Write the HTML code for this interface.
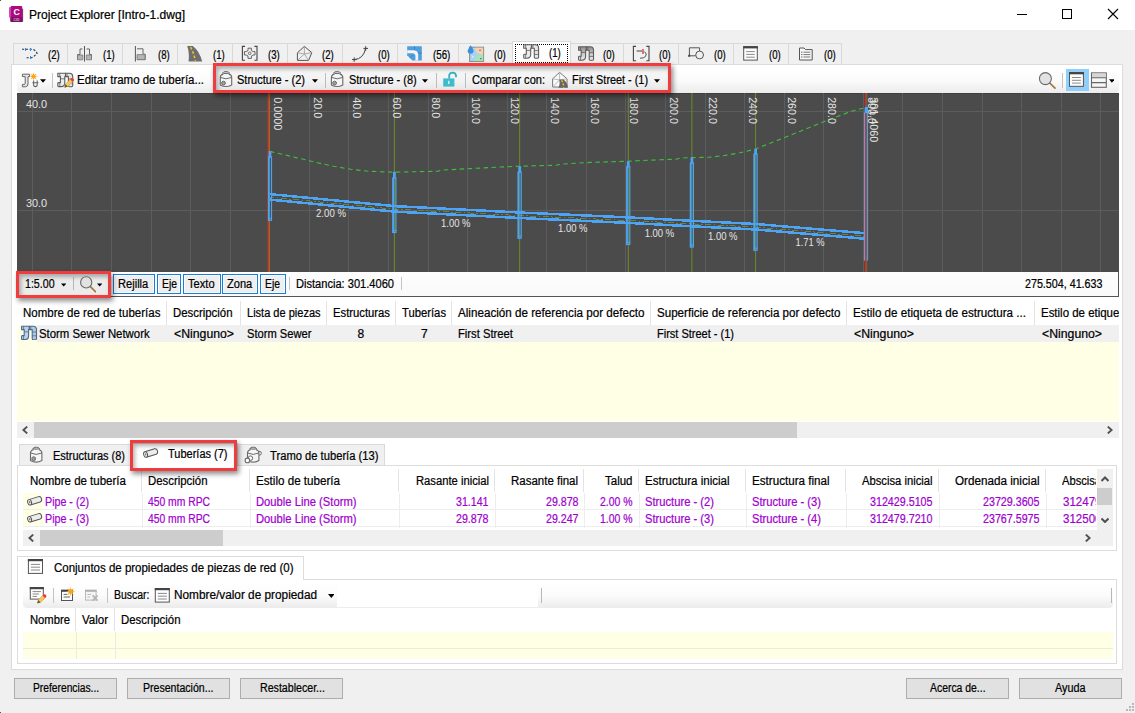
<!DOCTYPE html>
<html lang="es"><head><meta charset="utf-8"><title>Project Explorer [Intro-1.dwg]</title>
<style>
html,body{margin:0;padding:0;}
body{width:1135px;height:713px;overflow:hidden;background:#f0f0f0;position:relative;font-family:"Liberation Sans",sans-serif;font-size:12px;color:#000;}
#root{position:absolute;left:0;top:0;width:1135px;height:713px;overflow:hidden;}
#root div,#root span.t,#root svg{position:absolute;box-sizing:border-box;}
span.t{white-space:nowrap;line-height:16px;height:16px;transform-origin:0 0;-webkit-text-stroke:0.22px;}
</style></head><body><div id="root">
<div style="left:0px;top:0px;width:1135px;height:30px;background:#fff;"></div>
<svg style="left:8px;top:5px" width="17" height="18" viewBox="8 5 17 18" ><path d="M9 7.4L11 6.4V17.2L9 17.6Z" fill="#d648b6"/><path d="M11.6 6H21.4Q22.2 6 22.2 6.8V17.2H10.9V6.7Q10.9 6 11.6 6Z" fill="#ae0a80"/><path d="M22.2 8.6L23.1 9V21.2Q23.1 21.9 22.4 21.9H22.2Z" fill="#6e0a54"/><path d="M10.2 17.1H22.3V21.9H11Q10.2 21.9 10.2 21.1Z" fill="#820f66"/><text x="16.6" y="14.9" font-family="Liberation Sans,sans-serif" font-weight="bold" font-size="8.8" fill="#fff" text-anchor="middle">C</text><text x="16.5" y="20.5" font-family="Liberation Sans,sans-serif" font-weight="bold" font-size="3.1" fill="#dfa8d0" text-anchor="middle">C3D</text></svg>
<div style="left:0px;top:0px;width:1px;height:1px;background:#555;"></div>
<span class="t" style="left:29.00px;top:7px;transform:scaleX(1.0039);">Project Explorer [Intro-1.dwg]</span>
<div style="left:1017px;top:14px;width:10px;height:1px;background:#000;"></div>
<div style="left:1062px;top:9px;width:10px;height:10px;border:1px solid #000;"></div>
<svg style="left:1107px;top:8px" width="12" height="12" viewBox="0 0 12 12"><path d="M1 1 L11 11 M11 1 L1 11" stroke="#000" stroke-width="1.1" fill="none"/></svg>
<div style="left:13px;top:43px;width:55px;height:22px;background:#f0f0f0;border:1px solid #d9d9d9;"></div>
<div style="left:67px;top:43px;width:56px;height:22px;background:#f0f0f0;border:1px solid #d9d9d9;"></div>
<div style="left:122px;top:43px;width:56px;height:22px;background:#f0f0f0;border:1px solid #d9d9d9;"></div>
<div style="left:177px;top:43px;width:56px;height:22px;background:#f0f0f0;border:1px solid #d9d9d9;"></div>
<div style="left:232px;top:43px;width:56px;height:22px;background:#f0f0f0;border:1px solid #d9d9d9;"></div>
<div style="left:287px;top:43px;width:56px;height:22px;background:#f0f0f0;border:1px solid #d9d9d9;"></div>
<div style="left:342px;top:43px;width:56px;height:22px;background:#f0f0f0;border:1px solid #d9d9d9;"></div>
<div style="left:397px;top:43px;width:62px;height:22px;background:#f0f0f0;border:1px solid #d9d9d9;"></div>
<div style="left:458px;top:43px;width:56px;height:22px;background:#f0f0f0;border:1px solid #d9d9d9;"></div>
<div style="left:570px;top:43px;width:54px;height:22px;background:#f0f0f0;border:1px solid #d9d9d9;"></div>
<div style="left:623px;top:43px;width:56px;height:22px;background:#f0f0f0;border:1px solid #d9d9d9;"></div>
<div style="left:678px;top:43px;width:56px;height:22px;background:#f0f0f0;border:1px solid #d9d9d9;"></div>
<div style="left:733px;top:43px;width:56px;height:22px;background:#f0f0f0;border:1px solid #d9d9d9;"></div>
<div style="left:788px;top:43px;width:54px;height:22px;background:#f0f0f0;border:1px solid #d9d9d9;"></div>
<div style="left:11px;top:64px;width:1112px;height:606px;background:#fff;border:1px solid #dcdcdc;"></div>
<div style="left:512px;top:41px;width:59px;height:24px;background:#fff;border:1px solid #d9d9d9;border-bottom:none;"></div>
<div style="left:515px;top:44px;width:53px;height:19px;border:1px dotted #000;"></div>
<svg style="left:17px;top:93px" width="1102" height="179" viewBox="17 93 1102 179" font-family="Liberation Sans,sans-serif">
<rect x="17" y="93" width="1102" height="179" fill="#4b4b4b"/>
<rect x="17" y="93" width="1102" height="1" fill="#404040"/>
<path d="M32.5 93V272 M71.5 93V272 M111.5 93V272 M151.5 93V272 M190.5 93V272 M230.5 93V272 M269.5 93V272 M309.5 93V272 M348.5 93V272 M388.5 93V272 M428.5 93V272 M467.5 93V272 M507.5 93V272 M546.5 93V272 M586.5 93V272 M625.5 93V272 M665.5 93V272 M705.5 93V272 M744.5 93V272 M784.5 93V272 M823.5 93V272 M863.5 93V272 M902.5 93V272 M942.5 93V272 M982.5 93V272 M1021.5 93V272 M1061.5 93V272 M1100.5 93V272 M17 111.5H1119 M17 210.5H1119" stroke="#5c5c5c" stroke-width="1" fill="none"/>
<path d="M394.4 93V272 M519.7 93V272 M628.3 93V272 M691.9 93V272 M755.6 93V272" stroke="#6f8a2a" stroke-width="1" fill="none"/>
<path d="M270 151.4 L282.8 154.4 L296 157.6 L309.3 160.7 L321 163.6 L333.3 166.2 L351 169.3 L368.7 171.3 L394 172.2 L420 171.6 L437.9 171.3 L441 170.2 L470 168.6 L501 167 L519.7 166.2 L540 165.6 L556.6 165.3 L560 164.2 L590.4 162.4 L610 161.8 L628 161.2 L638.4 160.7 L660 159.8 L676 159.2 L680 158.2 L692 157.6 L710 157.2 L725 155.4 L740 152.8 L755.6 149 L775.8 141 L801 130.9 L826 120.8 L851.5 111.2 L865.5 107.6" stroke="#3cc03c" stroke-width="1.1" stroke-dasharray="4.5 3.5" fill="none"/>
<path d="M268.5 197.05 L394.4 209.15 L519.7 215.55 L628.3 220.45000000000002 L691.9 223.85000000000002 L755.6 227.05 L865.9 236.35000000000002" stroke="#76892c" stroke-width="0.9" stroke-dasharray="6 2.5 1.5 2.5" fill="none" shape-rendering="crispEdges"/>
<path d="M268.5 194 L394.4 206.1 L519.7 212.5 L628.3 217.4 L691.9 220.8 L755.6 224 L865.9 233.3 M268.5 199.5 L394.4 211.6 L519.7 218.0 L628.3 222.9 L691.9 226.3 L755.6 229.5 L865.9 238.8" stroke="#4ba4f6" stroke-width="2.5" fill="none" shape-rendering="crispEdges"/>
<rect x="267.6" y="93" width="1.6" height="179" fill="#e8291c"/>
<rect x="269.2" y="93" width="0.8" height="179" fill="#6f8a2a"/>
<rect x="268.5" y="157" width="3.0" height="63.3" fill="none" stroke="#4ba4f6" stroke-width="1.2"/>
<rect x="268.0" y="157" width="1.6" height="63.8" fill="#4ba4f6"/>
<rect x="268.6" y="151.2" width="2.8" height="6.3" fill="#4ba4f6"/>
<path d="M268.0 218.2h4.0" stroke="#4ba4f6" stroke-width="1"/>
<rect x="392.9" y="177.8" width="3.0" height="54.7" fill="none" stroke="#4ba4f6" stroke-width="1.2"/>
<rect x="392.4" y="177.8" width="1.6" height="55.2" fill="#4ba4f6"/>
<rect x="393.0" y="171.8" width="2.8" height="6.5" fill="#4ba4f6"/>
<path d="M392.4 230.4h4.0" stroke="#4ba4f6" stroke-width="1"/>
<rect x="518.2" y="172" width="3.0" height="66.2" fill="none" stroke="#4ba4f6" stroke-width="1.2"/>
<rect x="517.7" y="172" width="1.6" height="66.7" fill="#4ba4f6"/>
<rect x="518.3" y="166.2" width="2.8" height="6.3" fill="#4ba4f6"/>
<path d="M517.7 236.1h4.0" stroke="#4ba4f6" stroke-width="1"/>
<rect x="626.8" y="166.7" width="3.0" height="77.8" fill="none" stroke="#4ba4f6" stroke-width="1.2"/>
<rect x="626.3" y="166.7" width="1.6" height="78.3" fill="#4ba4f6"/>
<rect x="626.9" y="161.2" width="2.8" height="6.0" fill="#4ba4f6"/>
<path d="M626.3 242.4h4.0" stroke="#4ba4f6" stroke-width="1"/>
<rect x="690.4" y="163" width="3.0" height="84.0" fill="none" stroke="#4ba4f6" stroke-width="1.2"/>
<rect x="689.9" y="163" width="1.6" height="84.5" fill="#4ba4f6"/>
<rect x="690.5" y="157.4" width="2.8" height="6.1" fill="#4ba4f6"/>
<path d="M689.9 244.9h4.0" stroke="#4ba4f6" stroke-width="1"/>
<rect x="754.1" y="154" width="3.0" height="96.3" fill="none" stroke="#4ba4f6" stroke-width="1.2"/>
<rect x="753.6" y="154" width="1.6" height="96.8" fill="#4ba4f6"/>
<rect x="754.2" y="149" width="2.8" height="5.5" fill="#4ba4f6"/>
<path d="M753.6 248.2h4.0" stroke="#4ba4f6" stroke-width="1"/>
<rect x="864.5" y="113" width="3.0" height="146.9" fill="none" stroke="#4ba4f6" stroke-width="1.2"/>
<rect x="864.0" y="113" width="1.6" height="147.4" fill="#4ba4f6"/>
<rect x="864.6" y="107.6" width="2.8" height="5.9" fill="#4ba4f6"/>
<path d="M864.0 257.8h4.0" stroke="#4ba4f6" stroke-width="1"/>
<rect x="865.1" y="93" width="1.5" height="179" fill="#e8291c"/>
<rect x="866.6" y="93" width="0.5" height="179" fill="#6f8a2a"/>
<rect x="865" y="107" width="3" height="6" fill="#4ba4f6"/>
<text transform="translate(25.9,108.3) scale(0.931,1)" font-size="11.7" fill="#e4e4e4">40.0</text>
<text transform="translate(25.9,207.3) scale(0.931,1)" font-size="11.7" fill="#e4e4e4">30.0</text>
<text transform="translate(274.0,97.2) rotate(90) scale(0.928,1)" font-size="11.7" fill="#e4e4e4">0.0000</text>
<text transform="translate(313.6,97.2) rotate(90) scale(0.922,1)" font-size="11.7" fill="#e4e4e4">20.0</text>
<text transform="translate(353.1,97.2) rotate(90) scale(0.922,1)" font-size="11.7" fill="#e4e4e4">40.0</text>
<text transform="translate(392.7,97.2) rotate(90) scale(0.922,1)" font-size="11.7" fill="#e4e4e4">60.0</text>
<text transform="translate(432.3,97.2) rotate(90) scale(0.922,1)" font-size="11.7" fill="#e4e4e4">80.0</text>
<text transform="translate(471.8,97.2) rotate(90) scale(0.909,1)" font-size="11.7" fill="#e4e4e4">100.0</text>
<text transform="translate(511.4,97.2) rotate(90) scale(0.909,1)" font-size="11.7" fill="#e4e4e4">120.0</text>
<text transform="translate(551.0,97.2) rotate(90) scale(0.909,1)" font-size="11.7" fill="#e4e4e4">140.0</text>
<text transform="translate(590.6,97.2) rotate(90) scale(0.909,1)" font-size="11.7" fill="#e4e4e4">160.0</text>
<text transform="translate(630.1,97.2) rotate(90) scale(0.909,1)" font-size="11.7" fill="#e4e4e4">180.0</text>
<text transform="translate(669.7,97.2) rotate(90) scale(0.909,1)" font-size="11.7" fill="#e4e4e4">200.0</text>
<text transform="translate(709.3,97.2) rotate(90) scale(0.909,1)" font-size="11.7" fill="#e4e4e4">220.0</text>
<text transform="translate(748.8,97.2) rotate(90) scale(0.909,1)" font-size="11.7" fill="#e4e4e4">240.0</text>
<text transform="translate(788.4,97.2) rotate(90) scale(0.909,1)" font-size="11.7" fill="#e4e4e4">260.0</text>
<text transform="translate(828.0,97.2) rotate(90) scale(0.909,1)" font-size="11.7" fill="#e4e4e4">280.0</text>
<text transform="translate(867.5,97.2) rotate(90) scale(0.909,1)" font-size="11.7" fill="#e4e4e4">300.0</text>
<text transform="translate(870.4,97.2) rotate(90) scale(0.922,1)" font-size="11.7" fill="#e4e4e4">301.4060</text>
<text transform="translate(316,217) scale(0.876,1)" font-size="11" fill="#e4e4e4">2.00 %</text>
<text transform="translate(441,227) scale(0.861,1)" font-size="11" fill="#e4e4e4">1.00 %</text>
<text transform="translate(558,232) scale(0.861,1)" font-size="11" fill="#e4e4e4">1.00 %</text>
<text transform="translate(644.7,237.2) scale(0.861,1)" font-size="11" fill="#e4e4e4">1.00 %</text>
<text transform="translate(708,240) scale(0.861,1)" font-size="11" fill="#e4e4e4">1.00 %</text>
<text transform="translate(795.5,246.3) scale(0.847,1)" font-size="11" fill="#e4e4e4">1.71 %</text>
</svg>
<div style="left:17px;top:68px;width:1102px;height:24.5px;background:linear-gradient(#ffffff 0%,#fbfbfb 50%,#ececec 100%);border-radius:4px;"></div>
<svg style="left:39.8px;top:78.5px" width="6.0" height="4" viewBox="0 0 7 4"><path d="M0 0H7L3.5 4Z" fill="#000"/></svg>
<div style="left:52px;top:73px;width:1px;height:15px;background:#c4c4c4;"></div>
<span class="t" style="left:76.70px;top:72px;transform:scaleX(0.9570);">Editar tramo de tubería...</span>
<span class="t" style="left:237.40px;top:72px;transform:scaleX(0.9189);">Structure - (2)</span>
<svg style="left:311.6px;top:78.5px" width="6.0" height="4" viewBox="0 0 7 4"><path d="M0 0H7L3.5 4Z" fill="#000"/></svg>
<div style="left:325px;top:73px;width:1px;height:15px;background:#c4c4c4;"></div>
<span class="t" style="left:348.70px;top:72px;transform:scaleX(0.9149);">Structure - (8)</span>
<svg style="left:422.3px;top:78.5px" width="6.0" height="4" viewBox="0 0 7 4"><path d="M0 0H7L3.5 4Z" fill="#000"/></svg>
<div style="left:436px;top:73px;width:1px;height:15px;background:#c4c4c4;"></div>
<div style="left:465px;top:73px;width:1px;height:15px;background:#c4c4c4;"></div>
<span class="t" style="left:471.90px;top:72px;transform:scaleX(0.9194);">Comparar con:</span>
<span class="t" style="left:571.50px;top:72px;transform:scaleX(0.9048);">First Street - (1)</span>
<svg style="left:653.7px;top:78.5px" width="6.0" height="4" viewBox="0 0 7 4"><path d="M0 0H7L3.5 4Z" fill="#000"/></svg>
<div style="left:1062px;top:73px;width:1px;height:15px;background:#c4c4c4;"></div>
<div style="left:1066px;top:69px;width:23px;height:22px;background:#91cffb;"></div>
<div style="left:17px;top:272px;width:1102px;height:25px;background:#555;"></div>
<div style="left:17px;top:272px;width:1101px;height:24px;background:linear-gradient(#fdfdfd,#fafafa);"></div>
<span class="t" style="left:25.20px;top:276px;transform:scaleX(0.8862);">1:5.00</span>
<svg style="left:60.9px;top:282.6px" width="5.3999999999999995" height="4" viewBox="0 0 7 4"><path d="M0 0H7L3.5 4Z" fill="#000"/></svg>
<div style="left:73px;top:277px;width:1px;height:13px;background:#c4c4c4;"></div>
<svg style="left:96.6px;top:282.6px" width="5.3999999999999995" height="4" viewBox="0 0 7 4"><path d="M0 0H7L3.5 4Z" fill="#000"/></svg>
<div style="left:113px;top:274px;width:41.5px;height:20px;background:#efefef;border:1px solid #1a7fd4;box-shadow:inset 0 0 0 1px #fafafa;"></div>
<span class="t" style="left:118.20px;top:276px;transform:scaleX(0.9266);">Rejilla</span>
<div style="left:156.6px;top:274px;width:24.700000000000017px;height:20px;background:#efefef;border:1px solid #1a7fd4;box-shadow:inset 0 0 0 1px #fafafa;"></div>
<span class="t" style="left:161.60px;top:276px;transform:scaleX(0.8613);">Eje</span>
<div style="left:183px;top:274px;width:37.5px;height:20px;background:#efefef;border:1px solid #1a7fd4;box-shadow:inset 0 0 0 1px #fafafa;"></div>
<span class="t" style="left:188.00px;top:276px;transform:scaleX(0.9268);">Texto</span>
<div style="left:222.2px;top:274px;width:35.80000000000001px;height:20px;background:#efefef;border:1px solid #1a7fd4;box-shadow:inset 0 0 0 1px #fafafa;"></div>
<span class="t" style="left:227.30px;top:276px;transform:scaleX(0.9197);">Zona</span>
<div style="left:260.2px;top:274px;width:26.100000000000023px;height:20px;background:#efefef;border:1px solid #1a7fd4;box-shadow:inset 0 0 0 1px #fafafa;"></div>
<span class="t" style="left:265.20px;top:276px;transform:scaleX(0.8613);">Eje</span>
<div style="left:289px;top:277px;width:1px;height:13px;background:#c4c4c4;"></div>
<span class="t" style="left:296.30px;top:276px;transform:scaleX(0.9237);">Distancia: 301.4060</span>
<div style="left:401px;top:277px;width:1px;height:13px;background:#c4c4c4;"></div>
<span class="t" style="left:1025.00px;top:276px;transform:scaleX(0.8927);">275.504, 41.633</span>
<div style="left:166px;top:301px;width:1px;height:24px;background:#e3e3e3;"></div>
<div style="left:240px;top:301px;width:1px;height:24px;background:#e3e3e3;"></div>
<div style="left:326px;top:301px;width:1px;height:24px;background:#e3e3e3;"></div>
<div style="left:395px;top:301px;width:1px;height:24px;background:#e3e3e3;"></div>
<div style="left:451px;top:301px;width:1px;height:24px;background:#e3e3e3;"></div>
<div style="left:650px;top:301px;width:1px;height:24px;background:#e3e3e3;"></div>
<div style="left:846px;top:301px;width:1px;height:24px;background:#e3e3e3;"></div>
<div style="left:1034px;top:301px;width:1px;height:24px;background:#e3e3e3;"></div>
<span class="t" style="left:23.20px;top:305px;transform:scaleX(0.9582);">Nombre de red de tuberías</span>
<span class="t" style="left:173.30px;top:305px;transform:scaleX(0.9490);">Descripción</span>
<span class="t" style="left:247.00px;top:305px;transform:scaleX(0.9187);">Lista de piezas</span>
<span class="t" style="left:333.00px;top:305px;transform:scaleX(0.9390);">Estructuras</span>
<span class="t" style="left:401.80px;top:305px;transform:scaleX(0.9382);">Tuberías</span>
<span class="t" style="left:458.00px;top:305px;transform:scaleX(0.9708);">Alineación de referencia por defecto</span>
<span class="t" style="left:657.00px;top:305px;transform:scaleX(0.9653);">Superficie de referencia por defecto</span>
<span class="t" style="left:852.80px;top:305px;transform:scaleX(0.9676);">Estilo de etiqueta de estructura ...</span>
<div style="left:1041px;top:300px;width:78px;height:25px;overflow:hidden;"><span class="t" style="left:0px;top:5px;transform:scaleX(0.955)">Estilo de etiqueta de tubería</span></div>
<div style="left:17px;top:325px;width:1102px;height:17px;background:#f0f0f0;"></div>
<span class="t" style="left:39.00px;top:326px;transform:scaleX(0.9478);">Storm Sewer Network</span>
<span class="t" style="left:174.30px;top:326px;transform:scaleX(1.0221);">&lt;Ninguno&gt;</span>
<span class="t" style="left:247.00px;top:326px;transform:scaleX(0.9294);">Storm Sewer</span>
<span class="t" style="left:357.50px;top:326px;">8</span>
<span class="t" style="left:421.00px;top:326px;">7</span>
<span class="t" style="left:458.00px;top:326px;transform:scaleX(0.9370);">First Street</span>
<span class="t" style="left:657.00px;top:326px;transform:scaleX(0.9167);">First Street - (1)</span>
<span class="t" style="left:853.50px;top:326px;transform:scaleX(1.0221);">&lt;Ninguno&gt;</span>
<span class="t" style="left:1041.50px;top:326px;transform:scaleX(1.0221);">&lt;Ninguno&gt;</span>
<div style="left:17px;top:342px;width:1102px;height:79px;background:#ffffe6;"></div>
<div style="left:17px;top:422px;width:1102px;height:15.5px;background:#f0f0f0;"></div>
<div style="left:34px;top:422px;width:763px;height:15.5px;background:#cdcdcd;"></div>
<svg style="left:22px;top:425.5px" width="6" height="8" viewBox="0 0 6 8"><path d="M5.2 0.6L1.4 4L5.2 7.4" stroke="#505050" stroke-width="1.9" fill="none"/></svg>
<svg style="left:1107px;top:425.5px" width="6" height="8" viewBox="0 0 6 8"><path d="M0.8 0.6L4.6 4L0.8 7.4" stroke="#505050" stroke-width="1.9" fill="none"/></svg>
<div style="left:19px;top:444px;width:112px;height:22px;background:#f0f0f0;border:1px solid #d9d9d9;"></div>
<div style="left:237px;top:444px;width:148px;height:22px;background:#f0f0f0;border:1px solid #d9d9d9;"></div>
<div style="left:17px;top:465px;width:1100px;height:86px;background:#fff;border:1px solid #dcdcdc;"></div>
<div style="left:130px;top:443px;width:108px;height:23px;background:#fff;border:1px solid #d9d9d9;border-bottom:none;"></div>
<span class="t" style="left:53.00px;top:448px;transform:scaleX(0.9149);">Estructuras (8)</span>
<span class="t" style="left:167.50px;top:446px;transform:scaleX(0.9168);">Tuberías (7)</span>
<span class="t" style="left:269.50px;top:448px;transform:scaleX(0.9329);">Tramo de tubería (13)</span>
<div style="left:141px;top:469px;width:1px;height:23px;background:#e3e3e3;"></div>
<div style="left:142px;top:493px;width:1px;height:35px;background:#ededed;"></div>
<div style="left:249px;top:469px;width:1px;height:23px;background:#e3e3e3;"></div>
<div style="left:250px;top:493px;width:1px;height:35px;background:#ededed;"></div>
<div style="left:398px;top:469px;width:1px;height:23px;background:#e3e3e3;"></div>
<div style="left:399px;top:493px;width:1px;height:35px;background:#ededed;"></div>
<div style="left:494px;top:469px;width:1px;height:23px;background:#e3e3e3;"></div>
<div style="left:495px;top:493px;width:1px;height:35px;background:#ededed;"></div>
<div style="left:583px;top:469px;width:1px;height:23px;background:#e3e3e3;"></div>
<div style="left:584px;top:493px;width:1px;height:35px;background:#ededed;"></div>
<div style="left:638px;top:469px;width:1px;height:23px;background:#e3e3e3;"></div>
<div style="left:639px;top:493px;width:1px;height:35px;background:#ededed;"></div>
<div style="left:745px;top:469px;width:1px;height:23px;background:#e3e3e3;"></div>
<div style="left:746px;top:493px;width:1px;height:35px;background:#ededed;"></div>
<div style="left:845px;top:469px;width:1px;height:23px;background:#e3e3e3;"></div>
<div style="left:846px;top:493px;width:1px;height:35px;background:#ededed;"></div>
<div style="left:938px;top:469px;width:1px;height:23px;background:#e3e3e3;"></div>
<div style="left:939px;top:493px;width:1px;height:35px;background:#ededed;"></div>
<div style="left:1045px;top:469px;width:1px;height:23px;background:#e3e3e3;"></div>
<div style="left:1046px;top:493px;width:1px;height:35px;background:#ededed;"></div>
<span class="t" style="left:29.50px;top:473px;transform:scaleX(0.9590);">Nombre de tubería</span>
<span class="t" style="left:148.00px;top:473px;transform:scaleX(0.9490);">Descripción</span>
<span class="t" style="left:256.00px;top:473px;transform:scaleX(0.9689);">Estilo de tubería</span>
<span class="t" style="left:415.50px;top:473px;transform:scaleX(0.9359);">Rasante inicial</span>
<span class="t" style="left:511.00px;top:473px;transform:scaleX(0.9571);">Rasante final</span>
<span class="t" style="left:605.30px;top:473px;transform:scaleX(0.9582);">Talud</span>
<span class="t" style="left:645.40px;top:473px;transform:scaleX(0.9602);">Estructura inicial</span>
<span class="t" style="left:752.30px;top:473px;transform:scaleX(0.9688);">Estructura final</span>
<span class="t" style="left:862.10px;top:473px;transform:scaleX(0.9350);">Abscisa inicial</span>
<span class="t" style="left:955.40px;top:473px;transform:scaleX(0.9746);">Ordenada inicial</span>
<div style="left:1062px;top:469px;width:34px;height:24px;overflow:hidden;"><span class="t" style="left:0px;top:4px;transform:scaleX(0.93)">Abscisa final</span></div>
<div style="left:23px;top:493px;width:20px;height:17px;background:#ffffe6;"></div>
<span class="t" style="left:45.20px;top:494px;transform:scaleX(0.8907);color:#a000d0;">Pipe - (2)</span>
<span class="t" style="left:148.00px;top:494px;transform:scaleX(0.8611);color:#a000d0;">450 mm RPC</span>
<span class="t" style="left:256.00px;top:494px;transform:scaleX(0.9358);color:#a000d0;">Double Line (Storm)</span>
<span class="t" style="left:456.00px;top:494px;transform:scaleX(0.8856);color:#a000d0;">31.141</span>
<span class="t" style="left:545.50px;top:494px;transform:scaleX(0.8856);color:#a000d0;">29.878</span>
<span class="t" style="left:600.30px;top:494px;transform:scaleX(0.8690);color:#a000d0;">2.00 %</span>
<span class="t" style="left:645.40px;top:494px;transform:scaleX(0.9324);color:#a000d0;">Structure - (2)</span>
<span class="t" style="left:752.30px;top:494px;transform:scaleX(0.9324);color:#a000d0;">Structure - (3)</span>
<span class="t" style="left:870.10px;top:494px;transform:scaleX(0.8916);color:#a000d0;">312429.5105</span>
<span class="t" style="left:983.40px;top:494px;transform:scaleX(0.8912);color:#a000d0;">23729.3605</span>
<div style="left:1063px;top:493px;width:33px;height:17px;overflow:hidden;"><span class="t" style="left:0px;top:1px;transform:scaleX(0.96);color:#a000d0">312479.7210</span></div>
<div style="left:23px;top:510px;width:20px;height:17px;background:#ffffe6;"></div>
<span class="t" style="left:45.20px;top:511px;transform:scaleX(0.8907);color:#a000d0;">Pipe - (3)</span>
<span class="t" style="left:148.00px;top:511px;transform:scaleX(0.8611);color:#a000d0;">450 mm RPC</span>
<span class="t" style="left:256.00px;top:511px;transform:scaleX(0.9358);color:#a000d0;">Double Line (Storm)</span>
<span class="t" style="left:456.00px;top:511px;transform:scaleX(0.8856);color:#a000d0;">29.878</span>
<span class="t" style="left:545.50px;top:511px;transform:scaleX(0.8856);color:#a000d0;">29.247</span>
<span class="t" style="left:600.30px;top:511px;transform:scaleX(0.8690);color:#a000d0;">1.00 %</span>
<span class="t" style="left:645.40px;top:511px;transform:scaleX(0.9324);color:#a000d0;">Structure - (3)</span>
<span class="t" style="left:752.30px;top:511px;transform:scaleX(0.9324);color:#a000d0;">Structure - (4)</span>
<span class="t" style="left:870.10px;top:511px;transform:scaleX(0.8916);color:#a000d0;">312479.7210</span>
<span class="t" style="left:983.40px;top:511px;transform:scaleX(0.8912);color:#a000d0;">23767.5975</span>
<div style="left:1063px;top:510px;width:33px;height:17px;overflow:hidden;"><span class="t" style="left:0px;top:1px;transform:scaleX(0.96);color:#a000d0">312500.0000</span></div>
<div style="left:23px;top:509px;width:1074px;height:1px;background:#ededed;"></div>
<div style="left:23px;top:526px;width:1074px;height:1px;background:#ededed;"></div>
<div style="left:1097px;top:469px;width:16px;height:61px;background:#f0f0f0;"></div>
<div style="left:1097px;top:488px;width:15px;height:17px;background:#cdcdcd;"></div>
<svg style="left:1101px;top:475.5px" width="8" height="6" viewBox="0 0 8 6"><path d="M0.5 5L4 1.5L7.5 5" stroke="#505050" stroke-width="2" fill="none"/></svg>
<svg style="left:1101px;top:516.5px" width="8" height="6" viewBox="0 0 8 6"><path d="M0.5 1.5L4 5L7.5 1.5" stroke="#505050" stroke-width="2" fill="none"/></svg>
<div style="left:23px;top:529.5px;width:1090px;height:16px;background:#f0f0f0;"></div>
<div style="left:40px;top:529.5px;width:183px;height:16px;background:#cdcdcd;"></div>
<svg style="left:28px;top:533.5px" width="6" height="8" viewBox="0 0 6 8"><path d="M5.2 0.6L1.4 4L5.2 7.4" stroke="#505050" stroke-width="1.9" fill="none"/></svg>
<svg style="left:1085px;top:533.5px" width="6" height="8" viewBox="0 0 6 8"><path d="M0.8 0.6L4.6 4L0.8 7.4" stroke="#505050" stroke-width="1.9" fill="none"/></svg>
<div style="left:17px;top:579px;width:1100px;height:85px;background:#fff;border:1px solid #dcdcdc;"></div>
<div style="left:17px;top:556px;width:287px;height:24px;background:#fff;border:1px solid #dcdcdc;border-bottom:none;"></div>
<span class="t" style="left:53.50px;top:560px;transform:scaleX(0.9572);">Conjuntos de propiedades de piezas de red (0)</span>
<div style="left:23px;top:583px;width:1090px;height:24.5px;background:linear-gradient(#ffffff 0%,#fbfbfb 50%,#ececec 100%);border-radius:4px;"></div>
<div style="left:337px;top:583px;width:201px;height:24px;background:#fff;"></div>
<div style="left:53px;top:588px;width:1px;height:15px;background:#c4c4c4;"></div>
<div style="left:107px;top:588px;width:1px;height:15px;background:#c4c4c4;"></div>
<div style="left:541px;top:588px;width:1px;height:15px;background:#b8b8b8;"></div>
<div style="left:1111px;top:588px;width:1px;height:15px;background:#b8b8b8;"></div>
<span class="t" style="left:113.60px;top:587px;transform:scaleX(0.8722);">Buscar:</span>
<span class="t" style="left:174.20px;top:587px;transform:scaleX(0.9835);">Nombre/valor de propiedad</span>
<svg style="left:327.7px;top:594.0px" width="6.6" height="4" viewBox="0 0 7 4"><path d="M0 0H7L3.5 4Z" fill="#000"/></svg>
<div style="left:75px;top:608px;width:1px;height:23px;background:#e3e3e3;"></div>
<div style="left:114px;top:608px;width:1px;height:23px;background:#e3e3e3;"></div>
<span class="t" style="left:29.50px;top:612px;transform:scaleX(0.9368);">Nombre</span>
<span class="t" style="left:82.30px;top:612px;transform:scaleX(0.9594);">Valor</span>
<span class="t" style="left:121.30px;top:612px;transform:scaleX(0.9490);">Descripción</span>
<div style="left:23px;top:632px;width:1090px;height:27px;background:#ffffe6;"></div>
<div style="left:23px;top:648px;width:1090px;height:1px;background:#ececdc;"></div>
<div style="left:76px;top:632px;width:1px;height:27px;background:#ececdc;"></div>
<div style="left:115px;top:632px;width:1px;height:27px;background:#ececdc;"></div>
<div style="left:14px;top:678px;width:103px;height:21px;background:#e1e1e1;border:1px solid #adadad;"></div>
<span class="t" style="left:33.30px;top:680px;transform:scaleX(0.8553);">Preferencias...</span>
<div style="left:127px;top:678px;width:103px;height:21px;background:#e1e1e1;border:1px solid #adadad;"></div>
<span class="t" style="left:143.00px;top:680px;transform:scaleX(0.8812);">Presentación...</span>
<div style="left:240px;top:678px;width:103px;height:21px;background:#e1e1e1;border:1px solid #adadad;"></div>
<span class="t" style="left:260.00px;top:680px;transform:scaleX(0.8856);">Restablecer...</span>
<div style="left:906px;top:678px;width:103px;height:21px;background:#e1e1e1;border:1px solid #adadad;"></div>
<span class="t" style="left:930.00px;top:680px;transform:scaleX(0.8672);">Acerca de...</span>
<div style="left:1019px;top:678px;width:103px;height:21px;background:#e1e1e1;border:1px solid #adadad;"></div>
<span class="t" style="left:1055.00px;top:680px;transform:scaleX(0.9024);">Ayuda</span>
<div style="left:1132px;top:703px;width:2px;height:2px;background:#b9b9b9;"></div>
<div style="left:1129px;top:706px;width:2px;height:2px;background:#b9b9b9;"></div>
<div style="left:1132px;top:706px;width:2px;height:2px;background:#b9b9b9;"></div>
<div style="left:1126px;top:709px;width:2px;height:2px;background:#b9b9b9;"></div>
<div style="left:1129px;top:709px;width:2px;height:2px;background:#b9b9b9;"></div>
<div style="left:1132px;top:709px;width:2px;height:2px;background:#b9b9b9;"></div>
<div style="left:0px;top:712px;width:1px;height:1px;background:#555;"></div>
<span class="t" style="left:47.80px;top:47px;transform:scaleX(0.8000);">(2)</span>
<span class="t" style="left:102.60px;top:47px;transform:scaleX(0.8000);">(1)</span>
<span class="t" style="left:157.80px;top:47px;transform:scaleX(0.8000);">(8)</span>
<span class="t" style="left:212.80px;top:47px;transform:scaleX(0.8000);">(1)</span>
<span class="t" style="left:267.50px;top:47px;transform:scaleX(0.8000);">(3)</span>
<span class="t" style="left:322.20px;top:47px;transform:scaleX(0.8000);">(2)</span>
<span class="t" style="left:377.80px;top:47px;transform:scaleX(0.8000);">(0)</span>
<span class="t" style="left:432.70px;top:47px;transform:scaleX(0.8122);">(56)</span>
<span class="t" style="left:493.70px;top:47px;transform:scaleX(0.8000);">(0)</span>
<span class="t" style="left:549.00px;top:45px;transform:scaleX(0.8000);">(1)</span>
<span class="t" style="left:603.30px;top:47px;transform:scaleX(0.8000);">(0)</span>
<span class="t" style="left:658.50px;top:47px;transform:scaleX(0.8000);">(0)</span>
<span class="t" style="left:713.80px;top:47px;transform:scaleX(0.8000);">(0)</span>
<span class="t" style="left:768.50px;top:47px;transform:scaleX(0.8000);">(0)</span>
<span class="t" style="left:823.60px;top:47px;transform:scaleX(0.8000);">(0)</span>
<svg style="left:20px;top:45px" width="20" height="16" viewBox="20 45 20 16" ><path d="M22 49.2H32.5Q36 50.5 37 53.2Q35 56 31.5 57.8H26.5" fill="none" stroke="#333" stroke-width="1.1" stroke-dasharray="2.2 1.6"/><path d="M25.5 47.8v2.8M30.5 47.8v2.8M35.6 53.5h2M30.5 56.4v2.8" stroke="#1e90ff" stroke-width="1" shape-rendering="crispEdges"/></svg>
<svg style="left:75px;top:45px" width="20" height="18" viewBox="75 45 20 18" ><path d="M84.5 46V61.5" stroke="#555" stroke-width="1"/><path d="M77.5 59.5V54.5H80V49H82.5M86.5 49H89.5V54.5H91.5V59.5" fill="none" stroke="#666" stroke-width="1"/><path d="M77.5 55H82.8V59.8H77.5ZM86.3 55H91.5V59.8H86.3Z" fill="#b4b4b4" stroke="#777" stroke-width="0.8"/></svg>
<svg style="left:132px;top:45px" width="18" height="18" viewBox="132 45 18 18" ><path d="M135.4 46V61.6" stroke="#555" stroke-width="1"/><path d="M137 48.8H143V54.2H145.2V59.6H137" fill="none" stroke="#666" stroke-width="1"/><path d="M137 54.6H145V59.6H137Z" fill="#b4b4b4" stroke="#777" stroke-width="0.8"/></svg>
<svg style="left:185px;top:45px" width="19" height="18" viewBox="185 45 19 18" ><path d="M187.2 46H192.8Q199.5 51 202.2 61.5H188.6Q189.6 53 187.2 46Z" fill="#6e6e6e"/><path d="M190.6 47.2Q193.8 53 195.4 61" fill="none" stroke="#f5c518" stroke-width="1.5" stroke-dasharray="2.6 2"/></svg>
<svg style="left:241px;top:45px" width="18" height="17" viewBox="241 45 18 17" ><path d="M245 46.4H242.4V60.2H245M254.4 46.4H257V60.2H254.4" fill="none" stroke="#444" stroke-width="1.1"/><path d="M248 48.2H251.4V50.6L253.2 51.6H255V55H253.2L251.4 56V58.4H248V56L246.2 55H244.4V51.6H246.2L248 50.6Z" fill="none" stroke="#555" stroke-width="0.9"/><circle cx="249.7" cy="53.3" r="1.3" fill="none" stroke="#555" stroke-width="0.8"/></svg>
<svg style="left:296px;top:45px" width="18" height="17" viewBox="296 45 18 17" ><path d="M304.4 46.4L311.8 52.6L308.6 60.4H297.4V52.8Z" fill="none" stroke="#555" stroke-width="1"/><path d="M304.4 46.4V54L311.8 52.6M304.4 54L308.6 60.4M304.4 54L297.4 60.4M304.4 54L297.4 52.8" fill="none" stroke="#999" stroke-width="0.8"/></svg>
<svg style="left:351px;top:45px" width="18" height="18" viewBox="351 45 18 18" ><path d="M354.2 59.6Q363.5 59 365.6 48.4" fill="none" stroke="#444" stroke-width="1"/><path d="M352 59.6H356.6M354.2 57.4V61.8M363.4 48.4H368M365.7 46.2V50.8" stroke="#444" stroke-width="1"/></svg>
<svg style="left:406px;top:45px" width="17" height="17" viewBox="406 45 17 17" ><path d="M407.2 46.2H421.8V60.5H412.4L407.2 55.2Z" fill="#4f9fdc"/><path d="M407.2 50.2H414Q418 50.6 418.2 54.6V60.5H415.4V55.6Q415.2 53.4 413 53.2H407.2Z" fill="#f4f4f4"/><path d="M414.6 46.2V50.2M418.2 53H421.8M409.8 57.8L412.6 55" stroke="#2f7fbe" stroke-width="0.8" fill="none"/></svg>
<svg style="left:467px;top:44px" width="18" height="19" viewBox="467 44 18 19" ><rect x="469.6" y="47.2" width="14" height="14.2" fill="#a9d3f2" stroke="#8a8a8a" stroke-width="1"/><path d="M474.6 47.7H483.1V54.4Q476 54.8 474.6 47.7Z" fill="#f9cfae"/><path d="M474 60.9Q475 54.8 483.1 54.4V60.9Z" fill="#a5e6b3"/><path d="M470.6 45.2Q473.8 49.4 473.6 51.4Q473.2 53.8 470.6 53.8Q468 53.8 467.6 51.4Q467.6 49.4 470.6 45.2Z" fill="#3b8fdc"/><rect x="479.4" y="49.8" width="1.2" height="1.2" fill="#555"/><rect x="480.2" y="58" width="1.2" height="1.2" fill="#555"/><rect x="472.2" y="56.2" width="1.2" height="1.2" fill="#fff"/></svg>
<svg style="left:522px;top:43px" width="18" height="17" viewBox="522 43 18 17" ><g transform="translate(523.1,44.2)"><path d="M0.6 0.6H8.4V3.8H7.6V10.4Q7.6 14 4 14H1.4Q0.6 14 0.6 13.2V10.8Q0.6 10 1.4 10H3.2V4H0.6Z" fill="#ececec" stroke="#5e5e5e" stroke-width="1.1" stroke-linejoin="round"/><path d="M8.4 0.6H12.4Q15.5 0.8 15.5 4V13Q15.5 14.1 14.4 14.1H12.3Q11.2 14.1 11.2 13V4H8.4Z" fill="#e6e6e6" stroke="#5e5e5e" stroke-width="1.1" stroke-linejoin="round"/><path d="M2.6 0.8V4M3.2 6.2H7.6M2.6 10V14M9.8 0.8V4M11.2 6.4H15.5M11.2 10.2H15.5" stroke="#5e5e5e" stroke-width="0.8" fill="none"/></g></svg>
<svg style="left:577px;top:45px" width="18" height="17" viewBox="577 45 18 17" ><defs><linearGradient id="pg" x1="0" y1="0" x2="0" y2="1"><stop offset="0" stop-color="#8a8a8a"/><stop offset="0.45" stop-color="#c4c4c4"/><stop offset="1" stop-color="#ececec"/></linearGradient></defs><g transform="translate(578,46.2)"><path d="M0.6 0.6H8.4V3.8H7.6V10.4Q7.6 14 4 14H1.4Q0.6 14 0.6 13.2V10.8Q0.6 10 1.4 10H3.2V4H0.6Z" fill="url(#pg)" stroke="#5e5e5e" stroke-width="1.1" stroke-linejoin="round"/><path d="M8.4 0.6H12.4Q15.5 0.8 15.5 4V13Q15.5 14.1 14.4 14.1H12.3Q11.2 14.1 11.2 13V4H8.4Z" fill="url(#pg)" stroke="#5e5e5e" stroke-width="1.1" stroke-linejoin="round"/><path d="M2.6 0.8V4M3.2 6.2H7.6M2.6 10V14M9.8 0.8V4M11.2 6.4H15.5M11.2 10.2H15.5" stroke="#5e5e5e" stroke-width="0.8" fill="none"/></g></svg>
<svg style="left:632px;top:45px" width="19" height="17" viewBox="632 45 19 17" ><path d="M636 46.4H633.4V60.8H636M646.4 46.4H649V60.8H646.4" fill="none" stroke="#444" stroke-width="1.1"/><path d="M636.6 51H642" stroke="#444" stroke-width="1"/><path d="M643 49V54" stroke="#d42020" stroke-width="1.2"/><path d="M644.6 51.6Q647.6 54 645.4 56.6Q643.6 58.4 640 58.2" fill="none" stroke="#555" stroke-width="1"/></svg>
<svg style="left:687px;top:46px" width="18" height="14" viewBox="687 46 18 14" ><path d="M689.4 55.8V47.8H699.6V51M689.4 55.8H695.6" fill="none" stroke="#555" stroke-width="1"/><circle cx="699.6" cy="55" r="3.9" fill="none" stroke="#555" stroke-width="1"/><rect x="688.2" y="54.8" width="2" height="2" fill="#444"/></svg>
<svg style="left:743px;top:46px" width="16" height="15" viewBox="743 46 16 15" ><rect x="743.7" y="46.7" width="13.6" height="13.4" fill="#fdfdfd" stroke="#555" stroke-width="1"/><rect x="743.2" y="46.2" width="14.6" height="2.2" fill="#444"/><path d="M746.2 51.6h8.6M746.2 54.400000000000006h8.6M746.2 57.2h8.6" stroke="#8a8a8a" stroke-width="1"/></svg>
<svg style="left:798px;top:47px" width="16" height="14" viewBox="798 47 16 14" ><path d="M799.5 60V48H804L805.4 49.6H812.2V60Z" fill="#fafafa" stroke="#555" stroke-width="1"/><path d="M803.4 52.2H810.4M803.4 54.6H810.4M803.4 57H810.4" stroke="#777" stroke-width="1"/><path d="M801.2 52.2h1.2M801.2 54.6h1.2M801.2 57h1.2" stroke="#444" stroke-width="1"/></svg>
<div style="left:213px;top:63px;width:458px;height:30px;border:3px solid #f03c3c;background:rgba(0,0,0,0.03);box-shadow:2px 3px 5px rgba(0,0,0,0.45), inset 2px 3px 4px rgba(0,0,0,0.3);"></div>
<div style="left:16px;top:271px;width:95px;height:27px;border:3px solid #f03c3c;background:rgba(0,0,0,0.06);box-shadow:2px 3px 5px rgba(0,0,0,0.45), inset 2px 3px 4px rgba(0,0,0,0.3);"></div>
<div style="left:130px;top:440px;width:107px;height:31px;border:3px solid #f03c3c;background:rgba(0,0,0,0);box-shadow:2px 3px 5px rgba(0,0,0,0.45), inset 2px 3px 4px rgba(0,0,0,0.3);"></div>
<svg style="left:218px;top:70px" width="16" height="19" viewBox="218 70 16 19" ><path d="M223.0 72.5V74.1Q220.3 74.89999999999999 220.3 77.39999999999999V84.89999999999999Q226.0 88.1 231.7 84.89999999999999V77.39999999999999Q231.7 74.89999999999999 229.0 74.1V72.5" fill="#f6f6f6" stroke="#6a6a6a" stroke-width="1.1"/><ellipse cx="226.0" cy="72.6" rx="3" ry="1" fill="#d4d4d4" stroke="#6a6a6a" stroke-width="1"/><path d="M220.3 77.39999999999999Q226.0 80.19999999999999 231.7 77.39999999999999" fill="none" stroke="#6a6a6a" stroke-width="1"/><circle cx="223.5" cy="83.1" r="1.9" fill="#a0a0a0" stroke="#6a6a6a" stroke-width="1"/></svg>
<svg style="left:329px;top:70px" width="16" height="19" viewBox="329 70 16 19" ><path d="M334.09999999999997 72.5V74.1Q331.4 74.89999999999999 331.4 77.39999999999999V84.89999999999999Q337.09999999999997 88.1 342.79999999999995 84.89999999999999V77.39999999999999Q342.79999999999995 74.89999999999999 340.09999999999997 74.1V72.5" fill="#f6f6f6" stroke="#6a6a6a" stroke-width="1.1"/><ellipse cx="337.09999999999997" cy="72.6" rx="3" ry="1" fill="#d4d4d4" stroke="#6a6a6a" stroke-width="1"/><path d="M331.4 77.39999999999999Q337.09999999999997 80.19999999999999 342.79999999999995 77.39999999999999" fill="none" stroke="#6a6a6a" stroke-width="1"/><circle cx="334.59999999999997" cy="83.1" r="1.9" fill="#a0a0a0" stroke="#6a6a6a" stroke-width="1"/></svg>
<svg style="left:441px;top:70px" width="18" height="18" viewBox="441 70 18 18" ><path d="M449.2 78.6V75.6Q449.4 72.8 452.6 72.6Q455.8 72.8 456 75.6V77.2" fill="none" stroke="#36aebf" stroke-width="1.8"/><rect x="443.2" y="78.4" width="11.2" height="8.2" fill="#3fbccc"/><rect x="448.2" y="80.8" width="1.2" height="3.2" fill="#fff"/></svg>
<svg style="left:550px;top:70px" width="19" height="19" viewBox="550 70 19 19" ><path d="M559.6 72.4L567 78.8V87H552.6V78.8Z" fill="#fafafa" stroke="#777" stroke-width="1"/><path d="M559.6 72.4V80L567 78.8M559.6 80L552.6 87M559.6 80L552.6 78.8" fill="none" stroke="#aaa" stroke-width="0.8"/><path d="M559.4 79.4H563.6Q567.4 82.4 568 87.8H558.6Q560.2 83.6 559.4 79.4Z" fill="#666"/><path d="M561.6 80.4Q563.6 83.6 563.8 87.6" fill="none" stroke="#f5c518" stroke-width="1.4" stroke-dasharray="2 1.4"/></svg>
<svg style="left:20px;top:70px" width="20" height="19" viewBox="20 70 20 19" ><path d="M22.4 74.2H29.6V76.6H28V84.2Q27.8 86.6 25.4 86.8H22.4V84.4H24.4Q25.2 84.4 25.2 83.6V76.6H22.4Z" fill="#e6e6e6" stroke="#666" stroke-width="1"/><path d="M33.6 80.4V84.4Q33.6 86.6 35.4 86.6Q37.2 86.6 37.2 84.4V80.4M32.4 82.8H38.4" fill="none" stroke="#666" stroke-width="1.1"/><path d="M33.6 72.2L34.3 74.9L36.6 73.4L35.2 75.7L37.8 76.4L35.2 77.1L36.6 79.4L34.3 77.9L33.6 80.6L32.9 77.9L30.6 79.4L32 77.1L29.4 76.4L32 75.7L30.6 73.4L32.9 74.9Z" fill="#ffa31a"/></svg>
<svg style="left:56px;top:71px" width="19" height="18" viewBox="56 71 19 18" ><g transform="translate(57.2,72.6)"><path d="M0.6 0.6H8.4V3.8H7.6V10.4Q7.6 14 4 14H1.4Q0.6 14 0.6 13.2V10.8Q0.6 10 1.4 10H3.2V4H0.6Z" fill="#ececec" stroke="#5c5c5c" stroke-width="1.1" stroke-linejoin="round"/><path d="M8.4 0.6H12.4Q15.5 0.8 15.5 4V13Q15.5 14.1 14.4 14.1H12.3Q11.2 14.1 11.2 13V4H8.4Z" fill="#e2e2e2" stroke="#5c5c5c" stroke-width="1.1" stroke-linejoin="round"/><path d="M2.6 0.8V4M3.2 6.2H7.6M2.6 10V14M9.8 0.8V4M11.2 6.4H15.5M11.2 10.2H15.5" stroke="#5c5c5c" stroke-width="0.8" fill="none"/></g><path d="M64.6 87.4L65.4 84.2L71 78.6L73.4 81L67.8 86.6Z" fill="#f7c65a" stroke="#c9973a" stroke-width="0.5"/><path d="M70.2 79.4L71.4 78.2Q72.2 77.6 73 78.4L73.8 79.2Q74.4 80 73.8 80.6L72.6 81.8Z" fill="#f0323c"/><path d="M64.6 87.4L65.4 84.2L67.8 86.6Z" fill="#555"/></svg>
<svg style="left:1037px;top:70px" width="20" height="20" viewBox="1037 70 20 20" ><path d="M1049.6000000000001 82.8L1055.0 88.19999999999999" stroke="#a47a42" stroke-width="1.7" stroke-linecap="round"/><circle cx="1045.4" cy="78.6" r="6" fill="#e2e2e2" stroke="#6a6a6a" stroke-width="1.1"/></svg>
<svg style="left:1068px;top:71px" width="17" height="17" viewBox="1068 71 17 17" ><rect x="1069.5" y="72.6" width="13.9" height="13.7" fill="#fdfdfd" stroke="#555" stroke-width="1"/><rect x="1069" y="72.1" width="14.9" height="2.2" fill="#444"/><path d="M1072 77.5h8.9M1072 80.3h8.9M1072 83.1h8.9" stroke="#8a8a8a" stroke-width="1"/></svg>
<svg style="left:1090px;top:71px" width="18" height="18" viewBox="1090 71 18 18" ><rect x="1091.5" y="72.9" width="14.8" height="14.4" fill="#f6f6f6" stroke="#666" stroke-width="1.1"/><rect x="1092" y="73.4" width="13.8" height="4" fill="#d6d6d6"/><path d="M1091.5 77.8H1106.3M1091.5 82.6H1106.3" stroke="#666" stroke-width="1.1"/></svg>
<svg style="left:1108.7px;top:78.6px" width="5.8" height="4" viewBox="0 0 7 4"><path d="M0 0H7L3.5 4Z" fill="#000"/></svg>
<svg style="left:78px;top:275px" width="18" height="18" viewBox="78 275 18 18" ><path d="M90.12 286.32L95.39999999999999 291.6" stroke="#a47a42" stroke-width="1.7" stroke-linecap="round"/><circle cx="86.2" cy="282.4" r="5.6" fill="#e2e2e2" stroke="#6a6a6a" stroke-width="1.1"/></svg>
<div style="left:17px;top:325px;width:20px;height:17px;background:#ffffe6;"></div>
<svg style="left:20px;top:325px" width="18" height="15" viewBox="20 325 18 15" ><g transform="translate(21,325.6)"><path d="M0.6 0.6H8.4V3.8H7.6V10.4Q7.6 14 4 14H1.4Q0.6 14 0.6 13.2V10.8Q0.6 10 1.4 10H3.2V4H0.6Z" fill="#bcd2e8" stroke="#4c6a8c" stroke-width="1.1" stroke-linejoin="round"/><path d="M8.4 0.6H12.4Q15.5 0.8 15.5 4V13Q15.5 14.1 14.4 14.1H12.3Q11.2 14.1 11.2 13V4H8.4Z" fill="#b0c8e0" stroke="#4c6a8c" stroke-width="1.1" stroke-linejoin="round"/><path d="M2.6 0.8V4M3.2 6.2H7.6M2.6 10V14M9.8 0.8V4M11.2 6.4H15.5M11.2 10.2H15.5" stroke="#4c6a8c" stroke-width="0.8" fill="none"/></g></svg>
<svg style="left:28px;top:446px" width="17" height="18" viewBox="28 446 17 18" ><path d="M33.2 448.09999999999997V449.7Q30.500000000000004 450.5 30.500000000000004 453.0V460.5Q36.2 463.7 41.900000000000006 460.5V453.0Q41.900000000000006 450.5 39.2 449.7V448.09999999999997" fill="#f6f6f6" stroke="#6a6a6a" stroke-width="1.1"/><ellipse cx="36.2" cy="448.2" rx="3" ry="1" fill="#d4d4d4" stroke="#6a6a6a" stroke-width="1"/><path d="M30.500000000000004 453.0Q36.2 455.8 41.900000000000006 453.0" fill="none" stroke="#6a6a6a" stroke-width="1"/><circle cx="33.7" cy="458.7" r="1.9" fill="#a0a0a0" stroke="#6a6a6a" stroke-width="1"/></svg>
<svg style="left:141px;top:445px" width="19" height="16" viewBox="141 445 19 16" ><g transform="translate(142.8,448) rotate(-17 7.7 5)"><path d="M2.6 2.2H12.8Q15 2.4 15 5Q15 7.6 12.8 7.8H2.6" fill="#ececec" stroke="#555" stroke-width="1"/><ellipse cx="2.6" cy="5" rx="1.9" ry="2.8" fill="#fafafa" stroke="#555" stroke-width="1"/><ellipse cx="2.7" cy="5" rx="0.7" ry="1.2" fill="#777"/></g></svg>
<svg style="left:243px;top:445px" width="20" height="19" viewBox="243 445 20 19" ><path d="M259 451.2Q261.6 451.4 261.4 453.4Q261.2 455.4 259 455.2" fill="#f4f4f4" stroke="#6e6e6e" stroke-width="1"/><path d="M250.2 448.09999999999997V449.7Q247.5 450.5 247.5 453.0V460.5Q253.2 463.7 258.9 460.5V453.0Q258.9 450.5 256.2 449.7V448.09999999999997" fill="#f6f6f6" stroke="#6a6a6a" stroke-width="1.1"/><ellipse cx="253.2" cy="448.2" rx="3" ry="1" fill="#d4d4d4" stroke="#6a6a6a" stroke-width="1"/><path d="M247.5 453.0Q253.2 455.8 258.9 453.0" fill="none" stroke="#6a6a6a" stroke-width="1"/><circle cx="250.4" cy="458.2" r="2.3" fill="#f6f6f6" stroke="#6e6e6e" stroke-width="1"/><circle cx="247.4" cy="460.4" r="2.3" fill="#fdfdfd" stroke="#6e6e6e" stroke-width="1.1"/></svg>
<svg style="left:25px;top:494px" width="19" height="14" viewBox="25 494 19 14" ><g transform="translate(26.8,495.8) rotate(-17 7.7 5)"><path d="M2.6 2.2H12.8Q15 2.4 15 5Q15 7.6 12.8 7.8H2.6" fill="#ececec" stroke="#555" stroke-width="1"/><ellipse cx="2.6" cy="5" rx="1.9" ry="2.8" fill="#fafafa" stroke="#555" stroke-width="1"/><ellipse cx="2.7" cy="5" rx="0.7" ry="1.2" fill="#777"/></g></svg>
<svg style="left:25px;top:511px" width="19" height="14" viewBox="25 511 19 14" ><g transform="translate(26.8,512.8) rotate(-17 7.7 5)"><path d="M2.6 2.2H12.8Q15 2.4 15 5Q15 7.6 12.8 7.8H2.6" fill="#ececec" stroke="#555" stroke-width="1"/><ellipse cx="2.6" cy="5" rx="1.9" ry="2.8" fill="#fafafa" stroke="#555" stroke-width="1"/><ellipse cx="2.7" cy="5" rx="0.7" ry="1.2" fill="#777"/></g></svg>
<svg style="left:27px;top:558px" width="17" height="17" viewBox="27 558 17 17" ><rect x="28.4" y="559.5" width="14.1" height="13.9" fill="#fdfdfd" stroke="#555" stroke-width="1"/><rect x="27.9" y="559" width="15.1" height="2.2" fill="#444"/><path d="M30.9 564.4h9.1M30.9 567.2h9.1M30.9 570h9.1" stroke="#8a8a8a" stroke-width="1"/></svg>
<svg style="left:29px;top:586px" width="19" height="18" viewBox="29 586 19 18" ><rect x="30.3" y="587.5" width="13" height="11.6" fill="#fdfdfd" stroke="#555" stroke-width="1"/><rect x="29.8" y="587" width="14" height="2.2" fill="#444"/><path d="M32.6 591.6H41M32.6 594H39M32.6 596.4H37" stroke="#8a8a8a" stroke-width="1"/><path d="M37.4 603.2L38.2 600L43.4 594.8L45.8 597.2L40.6 602.4Z" fill="#f7c65a" stroke="#c9973a" stroke-width="0.5"/><path d="M42.6 595.6L43.8 594.4Q44.6 593.8 45.4 594.6L46.2 595.4Q46.8 596.2 46.2 596.8L45 598Z" fill="#f0323c"/><path d="M37.4 603.2L38.2 600L40.6 602.4Z" fill="#555"/></svg>
<svg style="left:60px;top:586px" width="17" height="17" viewBox="60 586 17 17" ><rect x="61.5" y="590.3" width="11" height="10.2" fill="#fdfdfd" stroke="#555" stroke-width="1"/><rect x="61" y="589.8" width="7" height="2" fill="#444"/><path d="M63.6 594.4H67.4M63.6 597H70" stroke="#666" stroke-width="1"/><path d="M70.6 587L71.3 589.8L73.8 588.4L72.4 590.9L75.2 591.6L72.4 592.3L73.8 594.8L71.3 593.4L70.6 596.2L69.9 593.4L67.4 594.8L68.8 592.3L66 591.6L68.8 590.9L67.4 588.4L69.9 589.8Z" fill="#ffa31a"/></svg>
<svg style="left:84px;top:588px" width="16" height="15" viewBox="84 588 16 15" ><rect x="85.5" y="590.3" width="10.6" height="9.8" fill="#f4f4f4" stroke="#b8b8b8" stroke-width="1"/><rect x="85" y="589.8" width="11.6" height="2" fill="#b0b0b0"/><path d="M87.4 594.4H91M87.4 597H90" stroke="#bdbdbd" stroke-width="1"/><path d="M92.6 595.4L97.6 600.6M97.6 595.4L92.6 600.6" stroke="#b4b4b4" stroke-width="1.6"/></svg>
<svg style="left:154px;top:587px" width="17" height="17" viewBox="154 587 17 17" ><rect x="155.3" y="588.5" width="14" height="13.6" fill="#fdfdfd" stroke="#555" stroke-width="1"/><rect x="154.8" y="588" width="15" height="2.2" fill="#444"/><path d="M157.8 593.4h9M157.8 596.2h9M157.8 599h9" stroke="#8a8a8a" stroke-width="1"/></svg>
</div></body></html>
